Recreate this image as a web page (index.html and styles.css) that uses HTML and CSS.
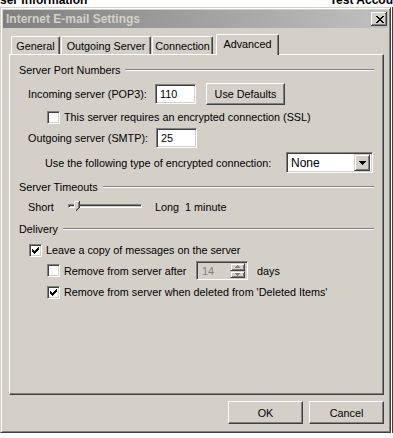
FILE: index.html
```html
<!DOCTYPE html>
<html>
<head>
<meta charset="utf-8">
<link rel="stylesheet" href="styles.css">
</head>
<body>
<div class="top-strip"><div class="top-strip-inner"><span class="bg-left">ser Information</span><span class="bg-right">Test Accou</span></div></div>
<div class="page">
  <div class="window">
    <div class="titlebar">
      <span class="title">Internet E-mail Settings</span>
      <div class="close">
        <svg width="8" height="7" viewBox="0 0 8 7" shape-rendering="crispEdges"><path d="M0 0h2v1H0zM6 0h2v1H6zM1 1h2v1H1zM5 1h2v1H5zM2 2h4v1H2zM3 3h2v1H3zM2 4h4v1H2zM1 5h2v1H1zM5 5h2v1H5zM0 6h2v1H0zM6 6h2v1H6z" fill="#000"/></svg>
      </div>
    </div>
    <div class="tabs">
      <div class="tab tab-general">General</div>
      <div class="tab tab-outgoing">Outgoing Server</div>
      <div class="tab tab-connection">Connection</div>
      <div class="tab tab-advanced active">Advanced</div>
    </div>
    <div class="panel">
      <div class="group-head gh-first"><span>Server Port Numbers</span><div class="rule"></div></div>
      <div class="row row-incoming">
        <span class="lbl lbl-in">Incoming server (POP3):</span>
        <div class="textbox">110</div>
        <div class="btn btn-defaults">Use Defaults</div>
      </div>
      <div class="row row-ssl">
        <div class="check"></div>
        <span class="ctext">This server requires an encrypted connection (SSL)</span>
      </div>
      <div class="row row-outgoing">
        <span class="lbl lbl-out">Outgoing server (SMTP):</span>
        <div class="textbox">25</div>
      </div>
      <div class="row row-enc">
        <span class="lbl-enc">Use the following type of encrypted connection:</span>
        <div class="select">
          <span class="select-val">None</span>
          <div class="select-btn"><svg width="7" height="4" viewBox="0 0 7 4" shape-rendering="crispEdges"><path d="M0 0h7v1H0zM1 1h5v1H1zM2 2h3v1H2zM3 3h1v1H3z" fill="#000"/></svg></div>
        </div>
      </div>
      <div class="group-head gh-timeouts"><span>Server Timeouts</span><div class="rule"></div></div>
      <div class="row row-short">
        <span class="lbl-short">Short</span>
        <div class="slider">
          <div class="track"></div>
          <svg class="thumb" width="6" height="10" viewBox="0 0 6 10" shape-rendering="crispEdges">
            <path d="M0 0h5v7l-2.5 2.5L0 7z" fill="#d4d0c8"/>
            <path d="M0 0h5v1H1v6H0z" fill="#fff"/>
            <path d="M5 0h1v7H5zM4 7h1v1H4zM3 8h1v1H3zM2 9h1v1H2z" fill="#404040"/>
            <path d="M4 1h1v6H4zM3 7h1v1H3zM2 8h1v1H2z" fill="#808080"/>
          </svg>
        </div>
        <span class="lbl-long">Long</span>
        <span>1 minute</span>
      </div>
      <div class="group-head gh-delivery"><span>Delivery</span><div class="rule"></div></div>
      <div class="row row-leave">
        <div class="check checked"><svg width="13" height="13" viewBox="0 0 13 13" shape-rendering="crispEdges"><path d="M3 5h1v3H3zM4 6h1v3H4zM5 7h1v3H5zM6 6h1v3H6zM7 5h1v3H7zM8 4h1v3H8zM9 3h1v3H9z" fill="#000"/></svg></div>
        <span class="ctext">Leave a copy of messages on the server</span>
      </div>
      <div class="row row-after">
        <div class="check"></div>
        <span class="ctext ctext-after">Remove from server after</span>
        <div class="spinner">
          <span class="spin-val">14</span>
          <div class="spin-btns">
            <div class="spin-btn"><svg width="5" height="3" viewBox="0 0 5 3" shape-rendering="crispEdges"><path d="M2 0h1v1H2zM1 1h3v1H1zM0 2h5v1H0z" fill="#808080"/></svg></div>
            <div class="spin-btn"><svg width="5" height="3" viewBox="0 0 5 3" shape-rendering="crispEdges"><path d="M0 0h5v1H0zM1 1h3v1H1zM2 2h1v1H2z" fill="#808080"/></svg></div>
          </div>
        </div>
        <span class="days">days</span>
      </div>
      <div class="row row-deleted">
        <div class="check checked"><svg width="13" height="13" viewBox="0 0 13 13" shape-rendering="crispEdges"><path d="M3 5h1v3H3zM4 6h1v3H4zM5 7h1v3H5zM6 6h1v3H6zM7 5h1v3H7zM8 4h1v3H8zM9 3h1v3H9z" fill="#000"/></svg></div>
        <span class="ctext">Remove from server when deleted from 'Deleted Items'</span>
      </div>
    </div>
    <div class="dialog-buttons">
      <div class="btn btn-dialog">OK</div>
      <div class="btn btn-dialog">Cancel</div>
    </div>
  </div>
  <div class="edge"></div>
</div>
</body>
</html>
```

FILE: styles.css
```css
* { box-sizing: border-box; }

body {
  margin: 0;
  width: 393px;
  height: 438px;
  overflow: hidden;
  background: #fff;
  font-family: "Liberation Sans", Arial, sans-serif;
  font-size: 10.8px;
  color: #000;
}

.top-strip {
  height: 7px;
  overflow: hidden;
}

.top-strip-inner {
  display: flex;
  margin-top: -6px;
  line-height: 13px;
  font-weight: bold;
  font-size: 12px;
  white-space: nowrap;
}

.bg-left { width: 333px; }

.page { display: flex; }

.window {
  width: 391px;
  height: 426px;
  background: #d4d0c8;
  border: 1px solid;
  border-color: #d4d0c8 #404040 #404040 #d4d0c8;
  box-shadow: inset 1px 1px #fff, inset -1px -1px #808080;
  padding: 2px;
  display: flex;
  flex-direction: column;
}

.edge {
  width: 2px;
  height: 426px;
  border-left: 1px solid #fff;
  background: #404040;
}

.titlebar {
  height: 18px;
  display: flex;
  align-items: center;
  padding-left: 3px;
  background: linear-gradient(to right, #808080, #c0c0c0);
}

.title {
  flex: 1;
  color: #d4d0c8;
  font-weight: bold;
  font-size: 12px;
}

.close {
  width: 16px;
  height: 14px;
  margin-right: 1px;
  background: #d4d0c8;
  box-shadow: inset -1px -1px #404040, inset 1px 1px #fff, inset -2px -2px #808080;
  display: flex;
  align-items: center;
  justify-content: center;
  padding-left: 1px;
}

.tabs {
  display: flex;
  align-items: flex-end;
  height: 20px;
  margin-top: 6px;
  padding-left: 8px;
  position: relative;
  z-index: 2;
}

.tab {
  height: 18px;
  display: flex;
  align-items: center;
  justify-content: center;
  background: #d4d0c8;
  border-top: 1px solid #fff;
  border-left: 1px solid #fff;
  border-right: 1px solid #404040;
  box-shadow: inset -1px 0 #808080;
  border-radius: 2px 2px 0 0;
  padding-top: 1px;
}

.tab-general { width: 49px; margin-right: 1px; }
.tab-outgoing { width: 90px; margin-right: 1px; }
.tab-connection { width: 61px; margin-right: 3px; }
.tab-advanced { width: 63px; }

.tab.active {
  height: 21px;
  margin-bottom: -1px;
  padding-top: 0;
  padding-bottom: 3px;
}

.panel {
  margin-left: 6px;
  width: 375px;
  height: 341px;
  border: 1px solid;
  border-color: #fff #404040 #404040 #fff;
  box-shadow: inset -1px -1px #808080;
  padding: 0 9px;
  display: flex;
  flex-direction: column;
}

.group-head {
  height: 14px;
  display: flex;
  align-items: center;
  white-space: nowrap;
}

.rule {
  flex: 1;
  height: 2px;
  margin-left: 5px;
  border-top: 1px solid #808080;
  border-bottom: 1px solid #fff;
}

.gh-first { margin-top: 8px; }
.gh-timeouts { margin-top: 7px; }
.gh-delivery { margin-top: 8px; }

.row {
  display: flex;
  align-items: center;
  white-space: nowrap;
}

.row-incoming { height: 22px; margin-top: 6px; padding-left: 9px; }
.row-ssl { height: 14px; margin-top: 5px; padding-left: 28px; }
.row-outgoing { height: 20px; margin-top: 4px; padding-left: 9px; }
.row-enc { height: 21px; margin-top: 4px; padding-left: 26px; }
.row-short { height: 14px; margin-top: 6px; padding-left: 9px; }
.row-leave { height: 14px; margin-top: 7px; padding-left: 10px; }
.row-after { height: 19px; margin-top: 4px; padding-left: 28px; }
.row-deleted { height: 14px; margin-top: 5px; padding-left: 28px; }

.lbl-in { width: 127px; }
.lbl-out { width: 128px; }
.lbl-enc { width: 241px; }

.textbox {
  width: 41px;
  height: 20px;
  background: #fff;
  border: 1px solid;
  border-color: #808080 #fff #fff #808080;
  box-shadow: inset 1px 1px #404040, inset -1px -1px #d4d0c8;
  padding-left: 4px;
  display: flex;
  align-items: center;
}

.btn {
  background: #d4d0c8;
  border: 1px solid;
  border-color: #fff #404040 #404040 #fff;
  box-shadow: inset -1px -1px #808080;
  display: flex;
  align-items: center;
  justify-content: center;
}

.btn-defaults {
  width: 79px;
  height: 22px;
  margin-left: 10px;
}

.check {
  width: 13px;
  height: 13px;
  flex: none;
  background: #fff;
  border: 1px solid;
  border-color: #808080 #fff #fff #808080;
  box-shadow: inset 1px 1px #404040, inset -1px -1px #d4d0c8;
}

.check svg {
  display: block;
  margin: -1px;
}

.ctext { margin-left: 4px; }
.ctext-after { width: 132px; }

.select {
  width: 87px;
  height: 21px;
  background: #fff;
  border: 1px solid;
  border-color: #808080 #fff #fff #808080;
  box-shadow: inset 1px 1px #404040, inset -1px -1px #d4d0c8;
  display: flex;
  align-items: center;
  padding: 2px;
}

.select-val {
  flex: 1;
  padding-left: 2px;
  font-size: 12px;
}

.select-btn {
  width: 16px;
  height: 17px;
  background: #d4d0c8;
  border: 1px solid;
  border-color: #d4d0c8 #404040 #404040 #d4d0c8;
  box-shadow: inset 1px 1px #fff, inset -1px -1px #808080;
  display: flex;
  align-items: center;
  justify-content: center;
}

.lbl-short { width: 40px; }

.slider {
  width: 87px;
  height: 14px;
  position: relative;
  display: flex;
  align-items: center;
}

.track {
  width: 74px;
  height: 4px;
  border: 1px solid;
  border-color: #808080 #fff #fff #808080;
  box-shadow: inset 1px 1px #404040, inset -1px -1px #d4d0c8;
  margin-top: -2px;
}

.thumb {
  position: absolute;
  left: 6px;
  top: 1px;
}

.lbl-long { width: 30px; }

.spinner {
  width: 52px;
  height: 19px;
  background: #d4d0c8;
  border: 1px solid;
  border-color: #808080 #fff #fff #808080;
  box-shadow: inset 1px 1px #404040, inset -1px -1px #d4d0c8;
  display: flex;
  align-items: center;
  padding: 2px 2px 2px 5px;
}

.spin-val {
  flex: 1;
  color: #808080;
}

.spin-btns {
  width: 15px;
  height: 15px;
  display: flex;
  flex-direction: column;
}

.spin-btn {
  flex: 1;
  background: #d4d0c8;
  border: 1px solid;
  border-color: #d4d0c8 #404040 #404040 #d4d0c8;
  box-shadow: inset 1px 1px #fff, inset -1px -1px #808080;
  display: flex;
  align-items: center;
  justify-content: center;
}

.days { margin-left: 9px; }

.dialog-buttons {
  display: flex;
  justify-content: flex-end;
  gap: 6px;
  margin-top: 6px;
  padding-right: 4px;
}

.btn-dialog {
  width: 75px;
  height: 23px;
}
```
